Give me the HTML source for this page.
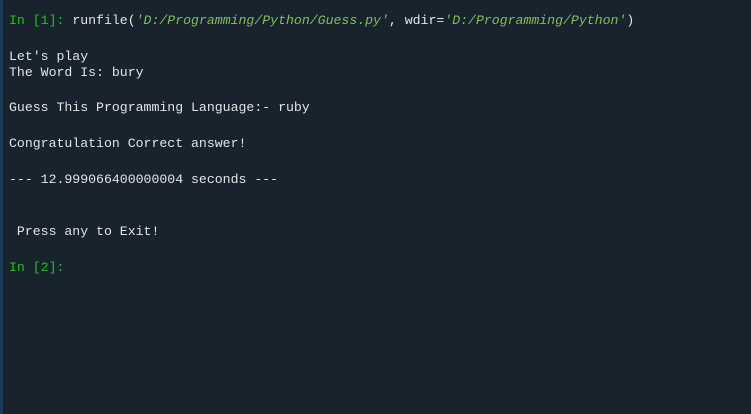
<!DOCTYPE html>
<html><head><meta charset="utf-8"><style>
html,body{margin:0;padding:0;width:751px;height:414px;background:#19232d;overflow:hidden}
.bar{position:absolute;left:0;top:0;width:3px;height:414px;background:#1d3a57}
.l{position:absolute;left:9px;font-family:"Liberation Mono",monospace;font-size:13.2px;line-height:18px;color:#e2e4e6;white-space:pre}
.p{color:#22c022}
.s{color:#7cc05a;font-style:italic}
</style></head><body>
<div class="bar"></div>
<div class="l" style="top:12px"><span class="p">In [1]:</span> runfile(<span class="s">'D:/Programming/Python/Guess.py'</span>, wdir=<span class="s">'D:/Programming/Python'</span>)</div>
<div class="l" style="top:48px">Let's play</div>
<div class="l" style="top:64px">The Word Is: bury</div>
<div class="l" style="top:99px">Guess This Programming Language:- ruby</div>
<div class="l" style="top:135px">Congratulation Correct answer!</div>
<div class="l" style="top:171px">--- 12.999066400000004 seconds ---</div>
<div class="l" style="top:223px"> Press any to Exit!</div>
<div class="l" style="top:259px"><span class="p">In [2]:</span></div>
</body></html>
